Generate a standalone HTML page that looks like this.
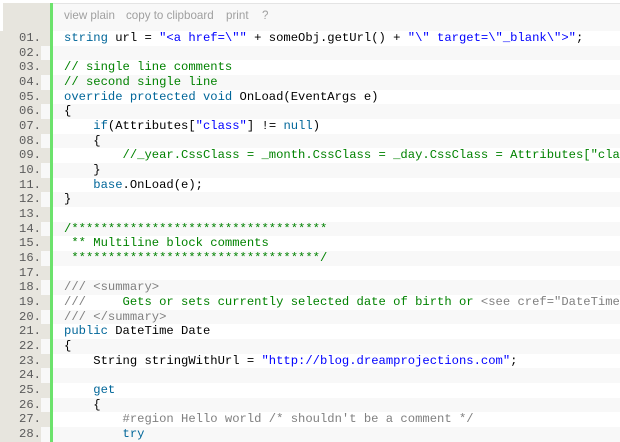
<!DOCTYPE html>
<html><head><meta charset="utf-8"><style>
html,body{margin:0;padding:0;background:#fff;width:620px;height:442px;overflow:hidden}
#w{position:absolute;left:3px;top:3px;right:0;bottom:0;background:#fff;border-top:1px solid #e4e4e4}
#g{position:absolute;left:3px;top:3px;width:47px;height:439px;background:#e7e5de}
#bar{position:absolute;left:50px;top:3px;width:3px;height:439px;background:#6ce26c}
#tb{position:absolute;left:53px;top:4px;right:0;height:27px;background:#f8f8f8;font:11.6px "Liberation Sans",sans-serif;color:#a0a0a0}
#tb span{position:absolute;top:5px}
.r{position:absolute;left:0;right:0;height:14.67px;font:12.2px/14.67px "Liberation Mono",monospace;white-space:pre;overflow:hidden}
.r.e{background:#f8f8f8}
.n{position:absolute;left:0;width:41px;text-align:right;color:#5c5c5c;background:#e7e5de}
.c{position:absolute;left:64px;color:#000}
.k{color:#006699}.s{color:#0000ff}.m{color:#008200}.p{color:#808080}
</style></head><body>
<div id="w"></div>
<div id="tb"><span style="left:11px">view plain</span><span style="left:73px">copy to clipboard</span><span style="left:173px">print</span><span style="left:209px">?</span></div>
<div id="g"></div>
<div id="code" style="position:absolute;left:0;top:31px;width:620px;height:411px;overflow:hidden">
<div class="r" style="top:0"><span class="n">01.</span><span class="c"><span class="k">string</span> url = <span class="s">"&lt;a href=\""</span> + someObj.getUrl() + <span class="s">"\" target=\"_blank\"&gt;"</span>;</span></div>
<div class="r e" style="top:14.67px"><span class="n">02.</span></div>
<div class="r" style="top:29.33px"><span class="n">03.</span><span class="c m">// single line comments</span></div>
<div class="r e" style="top:44px"><span class="n">04.</span><span class="c m">// second single line</span></div>
<div class="r" style="top:58.67px"><span class="n">05.</span><span class="c"><span class="k">override protected void</span> OnLoad(EventArgs e)</span></div>
<div class="r e" style="top:73.33px"><span class="n">06.</span><span class="c">{</span></div>
<div class="r" style="top:88px"><span class="n">07.</span><span class="c">    <span class="k">if</span>(Attributes[<span class="s">"class"</span>] != <span class="k">null</span>)</span></div>
<div class="r e" style="top:102.67px"><span class="n">08.</span><span class="c">    {</span></div>
<div class="r" style="top:117.33px"><span class="n">09.</span><span class="c">        <span class="m">//_year.CssClass = _month.CssClass = _day.CssClass = Attributes["cla</span></span></div>
<div class="r e" style="top:132px"><span class="n">10.</span><span class="c">    }</span></div>
<div class="r" style="top:146.67px"><span class="n">11.</span><span class="c">    <span class="k">base</span>.OnLoad(e);</span></div>
<div class="r e" style="top:161.33px"><span class="n">12.</span><span class="c">}</span></div>
<div class="r" style="top:176px"><span class="n">13.</span></div>
<div class="r e" style="top:190.67px"><span class="n">14.</span><span class="c m">/***********************************</span></div>
<div class="r" style="top:205.33px"><span class="n">15.</span><span class="c m"> ** Multiline block comments</span></div>
<div class="r e" style="top:220px"><span class="n">16.</span><span class="c m"> **********************************/</span></div>
<div class="r" style="top:234.67px"><span class="n">17.</span></div>
<div class="r e" style="top:249.33px"><span class="n">18.</span><span class="c"><span class="p">/// &lt;summary&gt;</span></span></div>
<div class="r" style="top:264px"><span class="n">19.</span><span class="c"><span class="p">///</span><span class="m">     Gets or sets currently selected date of birth or </span><span class="p">&lt;see cref="DateTime</span></span></div>
<div class="r e" style="top:278.67px"><span class="n">20.</span><span class="c"><span class="p">/// &lt;/summary&gt;</span></span></div>
<div class="r" style="top:293.33px"><span class="n">21.</span><span class="c"><span class="k">public</span> DateTime Date</span></div>
<div class="r e" style="top:308px"><span class="n">22.</span><span class="c">{</span></div>
<div class="r" style="top:322.67px"><span class="n">23.</span><span class="c">    String stringWithUrl = <span class="s">"http://blog.dreamprojections.com"</span>;</span></div>
<div class="r e" style="top:337.33px"><span class="n">24.</span></div>
<div class="r" style="top:352px"><span class="n">25.</span><span class="c">    <span class="k">get</span></span></div>
<div class="r e" style="top:366.67px"><span class="n">26.</span><span class="c">    {</span></div>
<div class="r" style="top:381.33px"><span class="n">27.</span><span class="c">        <span class="p">#region Hello world /* shouldn't be a comment */</span></span></div>
<div class="r e" style="top:396px"><span class="n">28.</span><span class="c">        <span class="k">try</span></span></div>
</div>
<div id="bar"></div>
</body></html>
